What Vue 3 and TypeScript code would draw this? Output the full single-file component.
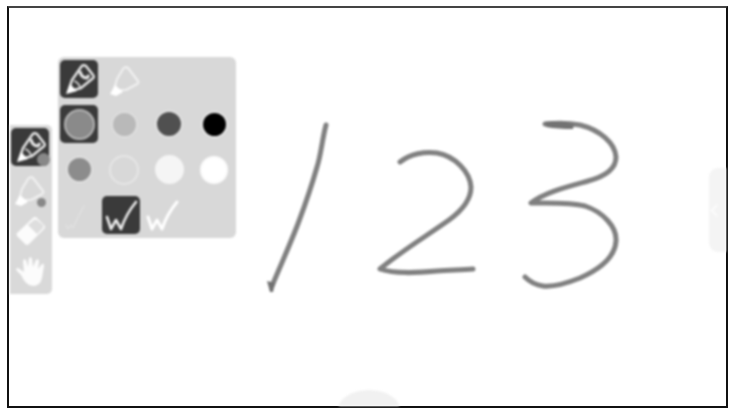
<script setup lang="ts">
interface Swatch { color: string; ring: string; size: number; active?: boolean }
const swatches: Swatch[] = [
  { color: '#8a8a8a', ring: '#b4b4b4', size: 31, active: true },
  { color: '#b9b9b9', ring: '#dedede', size: 27 },
  { color: '#505050', ring: '#e0e0e0', size: 28 },
  { color: '#000000', ring: '#e6e6e6', size: 27 },
  { color: '#8c8c8c', ring: '#dedede', size: 27 },
  { color: '#d8d8d8', ring: '#e6e6e6', size: 30 },
  { color: '#f5f5f5', ring: '#f5f5f5', size: 29 },
  { color: '#ffffff', ring: '#fbfbfb', size: 28 },
]
const strokes: string[] = [
  'M326 125 C322 140 321 155 317 167 C311 188 305 205 299 221 C292 240 282 262 272 286',
  'M400 162 C410 154 425 151 437 153 C455 156 470 172 471 187 C471 200 460 212 449 220 C425 237 400 252 380 269 C395 274 415 273 437 271 C450 270 462 270 473 269',
  'M545 124 C555 123 570 123 580 125 C600 130 615 143 616 157 C616 170 603 177 588 181 C570 186 545 192 531 203 C548 203 570 202 585 206 C603 212 617 227 616 241 C615 258 598 270 580 278 C565 284 552 287 543 286 C535 285 529 281 525 277',
]
</script>

<template>
  <main class="frame">
    <div class="canvas">
      <svg class="ink" viewBox="0 0 717 398" aria-hidden="true">
        <defs>
          <symbol id="pencil" viewBox="0 0 38 38">
            <path d="M8 32 L12 20 L21 7 Q23 4 26 6 L33 15 Q35 17 32 19 L21 28 Z" fill="none" stroke="#e6e6e6" stroke-width="2.4" stroke-linejoin="round" />
            <path d="M6 34 L10 24 L17 31 Z" fill="#ffffff" />
            <path d="M14 21 Q18 22 20 27" fill="none" stroke="#d8d8d8" stroke-width="1.8" />
            <path d="M20 11 Q21 18 27 18 L29 15" fill="none" stroke="#e6e6e6" stroke-width="3" />
          </symbol>
          <symbol id="marker" viewBox="0 0 38 38">
            <path d="M12 30 L15 19 L21 9 Q23 6 26 8 L36 21 Q37 23 35 24 L24 30 Z" fill="none" stroke="#f0f0f0" stroke-width="2.2" stroke-linejoin="round" />
            <path d="M8 34 L13 25 L21 32 L14 36 Z" fill="#ffffff" />
          </symbol>
          <symbol id="eraser" viewBox="0 0 38 38">
            <path d="M6 22 L22 7 Q24 5 26 7 L33 14 Q35 16 33 18 L18 33 Q16 35 14 33 L6 25 Q5 23 6 22 Z" fill="#fcfcfc" />
            <path d="M17 14 L26 23 L32 17 Q33 15 32 14 L26 9 Q24 8 23 9 Z" fill="#dedede" />
          </symbol>
          <symbol id="hand" viewBox="0 0 38 38">
            <path d="M10 22 L6 18 Q4 15 7 15 L13 19 L12 8 Q13 5 15 7 L17 14 L18 5 Q20 3 21 6 L22 14 L25 7 Q27 5 28 8 L27 16 L31 11 Q33 10 33 13 L31 25 Q29 33 22 33 Q15 33 10 22 Z" fill="#fcfcfc" />
          </symbol>
          <symbol id="check" viewBox="0 0 38 38">
            <path d="M5 21 L9 33 L14 24 L19 33 Q24 18 34 6" fill="none" stroke="#ececec" stroke-width="2.6" stroke-linejoin="round" stroke-linecap="round" />
          </symbol>
          <symbol id="check-bright" viewBox="0 0 38 38">
            <path d="M5 21 L9 33 L14 24 L19 33 Q24 18 34 6" fill="none" stroke="#ffffff" stroke-width="3" stroke-linejoin="round" stroke-linecap="round" />
          </symbol>
          <symbol id="check-thin" viewBox="0 0 38 38">
            <path d="M6 29 L8 33 L11 29 L13 32 Q18 20 24 10" fill="none" stroke="#e2e2e2" stroke-width="1.2" stroke-linecap="round" />
          </symbol>
        </defs>
        <g transform="translate(-9 -8)">
          <path v-for="d in strokes" :key="d" :d="d" class="stroke" />
          <path d="M545 122 Q560 120 574 124 L573 129 Q558 129 546 127 Z" fill="#727272" />
          <path d="M267 281 L275 283 L273 292 L270 292 Z" fill="#727272" />
        </g>
      </svg>

      <nav class="dock">
        <button class="tool on">
          <svg class="icon"><use href="#pencil" /></svg>
          <span class="badge badge-big"></span>
        </button>
        <button class="tool">
          <svg class="icon shift"><use href="#marker" /></svg>
          <span class="badge badge-small"></span>
        </button>
        <button class="tool"><svg class="icon"><use href="#eraser" /></svg></button>
        <button class="tool"><svg class="icon"><use href="#hand" /></svg></button>
      </nav>

      <section class="panel">
        <div class="row">
          <button class="tool on"><svg class="icon"><use href="#pencil" /></svg></button>
          <button class="tool"><svg class="icon"><use href="#marker" /></svg></button>
        </div>
        <div class="colors">
          <button v-for="s in swatches" :key="s.color" class="tool" :class="{ on: s.active }">
            <span class="dot" :style="{ width: s.size + 'px', height: s.size + 'px', background: s.color, borderColor: s.ring }"></span>
          </button>
        </div>
        <div class="row">
          <button class="tool"><svg class="icon"><use href="#check-thin" /></svg></button>
          <button class="tool on"><svg class="icon"><use href="#check" /></svg></button>
          <button class="tool"><svg class="icon"><use href="#check-bright" /></svg></button>
        </div>
      </section>

      <div class="handle-right"><span class="chevron"></span></div>
      <div class="handle-bottom"></div>
    </div>
  </main>
</template>

<style scoped>
.frame {
  box-sizing: border-box;
  width: 721px;
  height: 402px;
  margin: 6px 1px 1px 7px;
  background: #fff;
  border: 2px solid #111;
  border-top-color: #444;
}
.canvas {
  position: relative;
  height: 100%;
  overflow: hidden;
  filter: blur(0.9px);
}
.ink {
  position: absolute;
  left: 0;
  top: 0;
  width: 717px;
  height: 398px;
}
.stroke {
  fill: none;
  stroke: #808080;
  stroke-width: 5;
  stroke-linecap: round;
  stroke-linejoin: round;
}
.dock {
  position: absolute;
  left: 1px;
  top: 117px;
  display: flex;
  flex-direction: column;
  gap: 3.5px;
  width: 42px;
  box-sizing: border-box;
  padding: 3px 1px 3px 1px;
  background: #d9d9d9;
  border-radius: 0 5px 5px 0;
}
.panel {
  position: absolute;
  left: 49px;
  top: 49px;
  display: flex;
  flex-direction: column;
  gap: 7.3px;
  width: 178px;
  height: 181px;
  box-sizing: border-box;
  padding: 3px 3px 0 2px;
  background: #d8d8d8;
  border-radius: 6px;
}
.row {
  display: flex;
  gap: 3.5px;
}
.colors {
  display: grid;
  grid-template-columns: repeat(4, 38px);
  gap: 7.3px 7px;
}
.tool {
  position: relative;
  display: flex;
  align-items: center;
  justify-content: center;
  flex: none;
  width: 38px;
  height: 38px;
  padding: 0;
  border: 0;
  border-radius: 5px;
  background: transparent;
}
.tool.on {
  background: #3a3a3a;
}
.icon {
  display: block;
  width: 38px;
  height: 38px;
  overflow: visible;
}
.shift {
  transform: translateX(-4px);
}
.dot {
  box-sizing: border-box;
  display: block;
  border: 2px solid;
  border-radius: 50%;
}
.badge {
  position: absolute;
  border-radius: 50%;
  background: #888;
}
.badge-big {
  right: -1px;
  bottom: 0;
  width: 13px;
  height: 13px;
}
.badge-small {
  right: 3px;
  bottom: 1px;
  width: 9px;
  height: 9px;
}
.handle-right {
  position: absolute;
  right: 0;
  top: 160px;
  display: flex;
  align-items: center;
  width: 17px;
  height: 84px;
  background: #f4f4f4;
  border-radius: 9px 0 0 9px;
}
.chevron {
  width: 7px;
  height: 7px;
  margin-left: 3px;
  border-left: 2px solid #fcfcfc;
  border-bottom: 2px solid #fcfcfc;
  transform: rotate(45deg);
}
.handle-bottom {
  position: absolute;
  left: 329px;
  bottom: -4px;
  width: 62px;
  height: 20px;
  background: #f1f1f1;
  border-radius: 50% 50% 0 0 / 100% 100% 0 0;
}
</style>

<style>
html, body {
  background: #fff;
}
</style>
